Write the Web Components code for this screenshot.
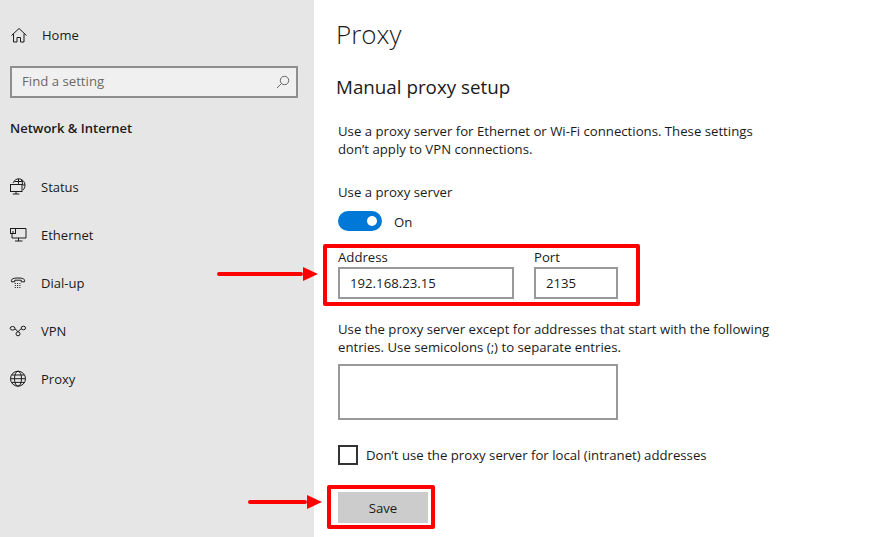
<!DOCTYPE html>
<html lang="en"><head><meta charset="utf-8"><title>Proxy</title>
<style>
html,body{margin:0;height:100%}
body{font-family:"Open Sans","Noto Sans","Liberation Sans",sans-serif;color:#1a1a1a;background:#fff;overflow:hidden}
</style></head><body>
<settings-page></settings-page>
<script>
const ICONS={
home:'<path d="M2.500 9.500 10 2.500l7.500 7M4.500 7.800V16h3.500v-4.500h3.500V16H15V7.800"/>',
status:'<path d="M4 5C5 2.500 7.500.8 9.500.8c3.700 0 6.500 3 6.500 6.500 0 1.800-.7 3.400-1.900 4.600M9.500.8v5M5.500 3.500h8.500M12.500 2c.8 1.500 1.100 3.400 1.100 5M14 7h2"/><rect x="1.500" y="6.500" width="11.500" height="7"/><path d="M7 13.500v2.500M3.800 16h6.500"/>',
ethernet:'<path d="M6.500 2.500h10.500v9.500H3V7.500"/><path d="M9.500 12v3M6 15h7.500"/><rect x="1.500" y="2.500" width="5" height="5"/><path d="M4 5v2.500"/>',
dial:'<path d="M2.500 7.800C2 5.600 2.800 4 9 4s7 1.600 6.500 3.800h-3.300V6.200H5.800v1.600z"/><path stroke-dasharray="1 1.300" d="M5.800 9.500h6.500M5.800 11.500h6.500M5.800 13.500h6.500"/>',
vpn:'<ellipse cx="3.600" cy="6.300" rx="2.400" ry="1.800"/><ellipse cx="14.400" cy="6" rx="2.200" ry="1.800"/><circle cx="9" cy="11.800" r="2"/><path d="M5.800 7c1.800.8 2.800 2 3.300 2.900M12.300 6.800C10.800 7.500 9.800 8.700 9.100 9.800"/>',
proxy:'<circle cx="9" cy="8.700" r="7.500"/><path d="M1.500 8.700h15M2.600 5h12.800M2.600 12.400h12.800"/><ellipse cx="9" cy="8.700" rx="3.500" ry="7.500"/>'
};
function def(name,css,html){
  customElements.define(name,class extends HTMLElement{
    constructor(){super();const r=this.attachShadow({mode:'open'});r.innerHTML='<style>'+css+'</style>'+html;}
  });
}
def('nav-item',`
:host{display:flex;align-items:center;height:48px;font-size:13px;color:#1a1a1a}
svg{width:18px;height:18px;margin-left:9px;flex:none;fill:none;stroke:#1a1a1a;stroke-width:1}
span{margin-left:14px}
:host(.h) span{margin-left:15px}
`,'<svg id="i" viewBox="0 0 18 18"></svg><span><slot></slot></span>');
def('search-box',`
:host{display:flex;align-items:center;justify-content:space-between;box-sizing:border-box;height:32px;margin:0 16px 0 10px;border:2px solid #8e8e8e;background:#f0f0f0;padding:0 6px 0 10px;font-size:13.2px;color:#6a6a6a}
span{position:relative;top:-1px}
svg{width:14px;height:14px;fill:none;stroke:#666;stroke-width:1}
`,'<span><slot></slot></span><svg viewBox="0 0 14 14"><circle cx="8.500" cy="5.500" r="4.200"/><path d="M5.500 8.500 1 13"/></svg>');
def('text-field',`
:host{display:flex;flex-direction:column;font-size:13.2px;color:#1a1a1a}
label{height:18px;line-height:18px;margin-top:-1px;margin-bottom:1px}
div{box-sizing:border-box;height:32px;border:2px solid #999;padding:0 10px;line-height:28px;background:#fff}
`,'<label><slot name="label"></slot></label><div><slot></slot></div>');
def('toggle-switch',`
:host{display:flex;align-items:center;font-size:13.2px;height:20px}
i{display:block;width:44px;height:20px;border-radius:10px;background:#0078d7;position:relative;margin-right:12px}
i::after{content:"";position:absolute;right:5px;top:5px;width:10px;height:10px;border-radius:50%;background:#fff}
span{position:relative;top:1px}
`,'<i></i><span><slot></slot></span>');
def('check-box',`
:host{display:flex;align-items:center;font-size:13.2px;height:21px}
i{display:block;box-sizing:border-box;width:20px;height:20px;border:2px solid #333;margin-right:8px}
`,'<i></i><span><slot></slot></span>');
def('save-button',`
:host{display:block;box-sizing:border-box;width:90px;height:31px;background:#ccc;text-align:center;font-size:13.2px;line-height:32px;color:#1a1a1a}
`,'<slot></slot>');
def('side-bar',`
:host{display:block;width:314px;flex:none;background:#e6e6e6;box-sizing:border-box;padding-top:11px}
.head{font-size:13px;font-weight:600;margin:20px 0 0 10px;height:20px;line-height:20px;color:#1a1a1a}
nav{margin-top:25px}
.h{margin-bottom:7px}
`,`<nav-item class="h" data-i="home">Home</nav-item>
<search-box>Find a setting</search-box>
<div class="head">Network &amp; Internet</div>
<nav><nav-item data-i="status">Status</nav-item><nav-item data-i="ethernet">Ethernet</nav-item><nav-item data-i="dial">Dial-up</nav-item><nav-item data-i="vpn">VPN</nav-item><nav-item data-i="proxy">Proxy</nav-item></nav>`);
def('red-frame',`
:host{display:block;position:absolute;box-sizing:border-box;border:4px solid #f00;border-radius:2px;pointer-events:none}
`,'');
def('red-arrow',`
:host{display:flex;align-items:center;position:absolute;height:16px}
b{display:block;flex:1;height:4px;background:#f00;border-radius:2px}
i{display:block;width:0;height:0;border-left:15px solid #f00;border-top:7.500px solid transparent;border-bottom:7.500px solid transparent}
`,'<b></b><i></i>');
def('settings-page',`
:host{display:flex;position:relative;width:870px;height:537px;overflow:hidden;background:#fff}
main{flex:1;box-sizing:border-box;padding:0 0 0 24px;font-size:13.2px}
h1{font-size:26px;font-weight:300;margin:0;height:70px;line-height:68px;margin-left:-2px;color:#1a1a1a}
h2{font-size:18.800px;font-weight:400;margin:0;height:36px;line-height:34px;margin-left:-2px;color:#1a1a1a}
p{margin:0;line-height:18px}
.intro{margin-top:16px;width:440px}
.lbl{margin-top:25px;height:18px;line-height:18px}
toggle-switch{margin-top:10px}
.fields{display:flex;gap:20px;margin-top:18px}
.a{width:176px}.b{width:84px}
.ex{margin-top:21px;width:450px}
.ta{box-sizing:border-box;width:280px;height:56px;border:2px solid #999;margin-top:8px}
check-box{margin-top:24px}
save-button{margin-top:27px}
red-frame.f1{left:323px;top:244px;width:317px;height:62px}
red-frame.f2{left:327px;top:485px;width:108px;height:44px}
red-arrow.r1{left:217px;top:266px;width:101px}
red-arrow.r2{left:248px;top:494px;width:74px}
`,`<side-bar></side-bar><main>
<h1>Proxy</h1><h2>Manual proxy setup</h2>
<p class="intro">Use a proxy server for Ethernet or Wi-Fi connections. These settings don’t apply to VPN connections.</p>
<div class="lbl">Use a proxy server</div>
<toggle-switch>On</toggle-switch>
<div class="fields"><text-field class="a"><span slot="label">Address</span>192.168.23.15</text-field><text-field class="b"><span slot="label">Port</span>2135</text-field></div>
<p class="ex">Use the proxy server except for addresses that start with the following entries. Use semicolons (;) to separate entries.</p>
<div class="ta"></div>
<check-box>Don’t use the proxy server for local (intranet) addresses</check-box>
<save-button>Save</save-button>
</main>
<red-frame class="f1"></red-frame><red-frame class="f2"></red-frame>
<red-arrow class="r1"></red-arrow><red-arrow class="r2"></red-arrow>`);
function fill(root){root.querySelectorAll('*').forEach(e=>{if(e.shadowRoot){const i=e.shadowRoot.getElementById('i');if(i&&e.dataset.i)i.innerHTML=ICONS[e.dataset.i];fill(e.shadowRoot);}});}
fill(document);
</script>
</body></html>
